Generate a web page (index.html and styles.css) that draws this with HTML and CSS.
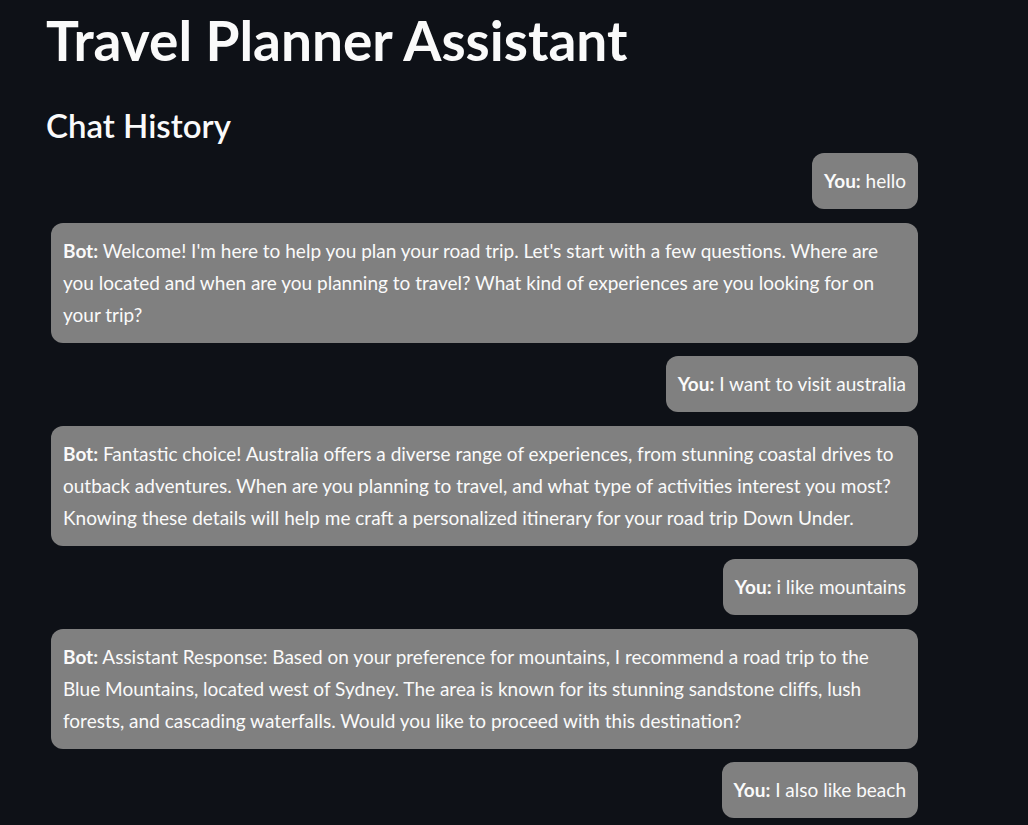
FILE: index.html
```html
<!DOCTYPE html>
<html lang="en">
<head>
<meta charset="utf-8">
<title>Travel Planner Assistant</title>
<link rel="stylesheet" href="styles.css">
</head>
<body>
<main class="main">
  <h1 class="title">Travel Planner Assistant</h1>
  <h3 class="subtitle">Chat History</h3>
  <div class="chat">
    <p class="msg msg-user"><b>You:</b> hello</p>
    <p class="msg msg-bot"><b>Bot:</b> Welcome! I'm here to help you plan your road trip. Let's start with a few questions. Where are you located and when are you planning to travel? What kind of experiences are you looking for on your trip?</p>
    <p class="msg msg-user"><b>You:</b> I want to visit australia</p>
    <p class="msg msg-bot"><b>Bot:</b> Fantastic choice! Australia offers a diverse range of experiences, from stunning coastal drives to outback adventures. When are you planning to travel, and what type of activities interest you most? Knowing these details will help me craft a personalized itinerary for your road trip Down Under.</p>
    <p class="msg msg-user"><b>You:</b> i like mountains</p>
    <p class="msg msg-bot"><b>Bot:</b> Assistant Response: Based on your preference for mountains, I recommend a road trip to the Blue Mountains, located west of Sydney. The area is known for its stunning sandstone cliffs, lush forests, and cascading waterfalls. Would you like to proceed with this destination?</p>
    <p class="msg msg-user"><b>You:</b> I also like beach</p>
  </div>
</main>
</body>
</html>
```

FILE: styles.css
```css
html, body {
  margin: 0;
  padding: 0;
  background: #0e1117;
  color: #fafafa;
  font-family: Lato, "Liberation Sans", sans-serif;
  overflow: hidden;
}

.main {
  width: 877px;
  padding: 0 0 0 46px;
}

.title {
  margin: 0;
  padding-top: 7px;
  font-size: 55px;
  font-weight: 700;
  line-height: 66px;
}

.subtitle {
  margin: 30px 0 0 0;
  font-size: 33px;
  font-weight: 600;
  line-height: 44px;
}

.chat {
  display: flex;
  flex-direction: column;
  gap: 13.5px;
  margin-top: 6px;
}

.msg {
  background: #808080;
  color: #fafafa;
  border-radius: 12px;
  padding: 12px 12px;
  margin: 0 5px;
  font-size: 19px;
  line-height: 32px;
}

.msg b {
  font-weight: 700;
}

.msg-user {
  align-self: flex-end;
}

.msg-bot {
  align-self: stretch;
}
```
